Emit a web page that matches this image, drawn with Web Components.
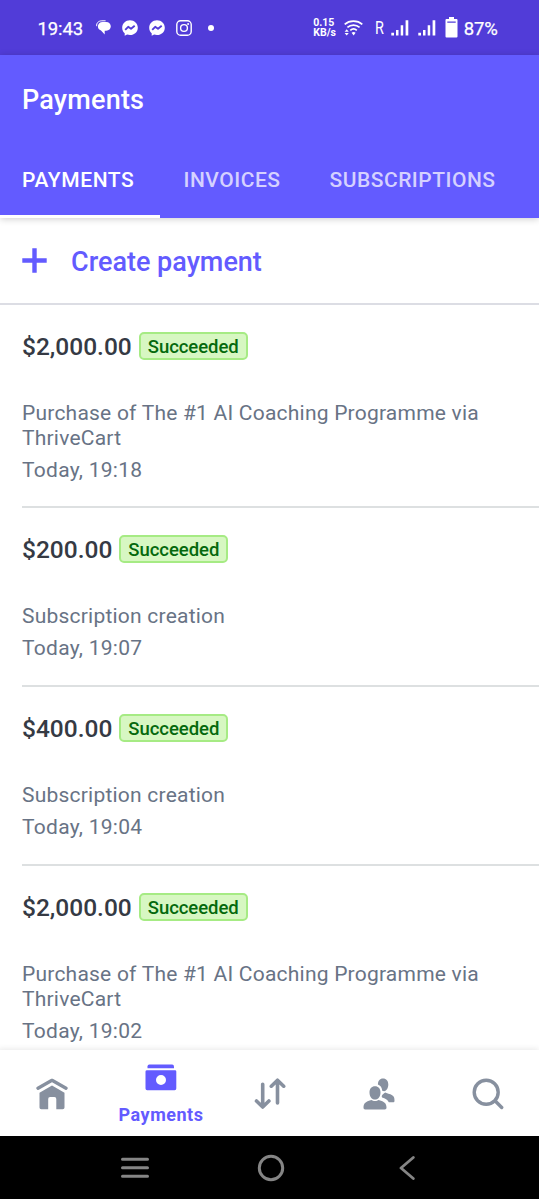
<!DOCTYPE html>
<html lang="en">
<head>
<meta charset="utf-8">
<title>Payments</title>
<style>
html,body{margin:0;height:100%;overflow:hidden;background:#fff}
body{font-family:Roboto,"Liberation Sans",sans-serif}
</style>
</head>
<body>
<payments-app></payments-app>
<script>
const define=(name,html,setup)=>customElements.define(name,class extends HTMLElement{
  connectedCallback(){
    if(this.shadowRoot)return;
    const t=document.createElement('template');
    t.innerHTML=html;
    this.attachShadow({mode:'open'}).append(t.content.cloneNode(true));
    if(setup)setup(this,this.shadowRoot);
  }
});

const ICONS={
  chat:['0 0 15 15','<path d="M.7 6.200C.2 3 2.600.8 5.800.8h3.800" fill="none" stroke="currentColor" stroke-width="1"/><path d="M6.600 1.900h3.600c2.700 0 4.600 1.900 4.600 4.400s-1.900 4.400-4.600 4.400H8.700v3.900L5 10.500C3 9.900 1.900 8.400 1.900 6.300c0-2.500 2-4.400 4.700-4.400z"/>'],
  messenger:['0 0 16 16','<path d="M8 .2C3.600.2.200 3.400.200 7.700c0 2.300 1 4.200 2.500 5.500V15.800l2.400-1.200c.9.300 1.900.4 2.900.4 4.400 0 7.800-3.100 7.800-7.300S12.400.2 8 .2z"/><path d="M3.200 9.800 6.200 6.800 9 8.700 12.700 5.800" fill="none" stroke="#513cd8" stroke-width="1.900" stroke-linejoin="round"/>'],
  instagram:['0 0 16 16','<g fill="none" stroke="currentColor" stroke-width="1.400"><rect x=".8" y=".8" width="14.400" height="14.400" rx="3.800"/><circle cx="8" cy="8" r="3.400"/></g><circle cx="12.100" cy="3.900" r="1"/>'],
  wifi:['0 0 19 16','<g fill="none" stroke="currentColor" stroke-width="1.700"><path d="M.7 4.300C5.500.1 13.500.1 18.300 4.300"/><path d="M3.400 7.400c3.500-3.100 8.700-3.100 12.200 0"/><path d="M6.300 10.300c2-1.800 4.600-1.800 6.500 0"/></g><path d="M7.600 12.800q2-1.500 4 0l-2 2.600zM.6 11.800 2.700 9.300l2.100 2.500zM.6 12.900h4.200l-2.100 2.500z"/>'],
  signal:['0 0 18 16','<path d="M.3 12.700h2.700v2.900H.3zM5 10h2.500v5.600H5zM9.700 5.300h2.500v10.300H9.700zM14.600.2h2.700v15.400h-2.700z"/>'],
  battery:['0 0 13 21','<path fill-rule="evenodd" d="M4 0h5v2h2.500q1 0 1 1v16.500q0 1-1 1h-10q-1 0-1-1V3q0-1 1-1H4zM2.300 4.500v1.300h8.400V4.500z"/>'],
  plus:['0 0 25 25','<path d="M10.300.3h4.400v10h10v4.400h-10v10h-4.400v-10H.3v-4.400h10z"/>'],
  home:['0 0 32 32','<path d="M2 10.300 16 2.300l14 8" fill="none" stroke="currentColor" stroke-width="3.300" stroke-linecap="round" stroke-linejoin="round"/><path d="M3.500 14.800 16 7.500l12.500 7.300v14.700q0 1.800-1.800 1.800H20.300V21q0-1.900-1.900-1.900h-4.300q-1.900 0-1.900 1.900v10.300H5.300q-1.800 0-1.800-1.800z"/>'],
  cash:['0 0 32 27','<path d="M2.500 4.300V2.500Q2.500.6 4.400.6h22.700q1.900 0 1.900 1.900v1.800z"/><path fill-rule="evenodd" d="M2 6.200h28q1.300 0 1.300 1.300v17q0 1.700-1.700 1.700H2.200Q.5 26.200.5 24.500v-17q0-1.300 1.500-1.300zM16 11a5 5 0 1 0 0 10 5 5 0 0 0 0-10z"/>'],
  transfer:['0 0 32 32','<g fill="none" stroke="currentColor" stroke-width="3.600" stroke-linecap="round" stroke-linejoin="round"><path d="M8.700 6.200v22.500M2.500 23l6.200 6 6.200-6M23.500 25V2.700M17.300 8.200l6.200-6 6.200 6"/></g>'],
  people:['0 0 32 32','<path d="M20 .5c3.300 0 5.300 2.500 5.300 5.900 0 3.100-1.600 6.300-4.200 6.800-.8 0-1.300-.1-1.900-.4-.1-3.100-1.700-5.300-4.300-6.300C15 3 16.700.5 20 .5zM19.100 19.500c-.6-.8-.4-1.800.3-2.700l2-1.900q1-.8 2 0c2.700 1 5.600 1.300 7.200 3.700.8 1.200.9 3 .9 4.300 0 .9-.6 1.400-1.500 1.400h-4.200c-1.200-2.700-3.600-4.100-6.700-4.800zM12 8.300c3.400 0 5.500 2.500 5.500 6.100 0 3.900-2.200 7.100-5.500 7.100s-5.500-3.200-5.500-7.100c0-3.600 2.100-6.100 5.500-6.100zM7.600 22.200q1-.4 1.900.2 2.500 1.200 5 0 .9-.6 1.900-.2c4.500 1.100 7.100 2.900 7.100 7.300 0 1.300-.5 1.900-1.800 1.900H2.300C1 31.400.5 30.800.5 29.500c0-4.400 2.600-6.200 7.100-7.300z"/>'],
  search:['0 0 32 32','<g fill="none" stroke="currentColor" stroke-width="3.400" stroke-linecap="round"><circle cx="14.200" cy="14.200" r="12"/><path d="m23.500 23.300 6.200 6.200"/></g>'],
  menu:['0 0 28 22','<path d="M1.500 2.300h25M1.500 10.800h25M1.500 19.300h25" stroke="currentColor" stroke-width="3" stroke-linecap="round"/>'],
  circle:['0 0 28 28','<circle cx="14" cy="14" r="11.700" fill="none" stroke="currentColor" stroke-width="3"/>'],
  back:['0 0 16 24','<path d="M14.300 1.500 2 12l12.300 10.500" fill="none" stroke="currentColor" stroke-width="2.800" stroke-linecap="round" stroke-linejoin="round"/>']
};
define('ui-icon','<style>:host{display:block;flex:none}svg{display:block;width:100%;height:100%;fill:currentColor}</style><svg aria-hidden="true"></svg>',(el,root)=>{
  const [box,body]=ICONS[el.getAttribute('name')],svg=root.querySelector('svg');
  svg.setAttribute('viewBox',box);svg.innerHTML=body;
  const [,,w,h]=box.split(' ');
  el.style.width=w+'px';el.style.height=h+'px';
});

define('status-bar',`<style>
:host{display:flex;align-items:center;height:55px;box-sizing:border-box;padding:0 42px 0 37.5px;background:#513cd8;color:#fff}
.time,.pct{font-size:18.500px;line-height:22px;padding-top:2px;-webkit-text-stroke:.25px currentColor}
.time{letter-spacing:-.1px;width:58px}
.left,.right{display:flex;align-items:center}
.left{gap:11px}.dot{width:6px;height:6px;border-radius:50%;background:#fff;margin-left:5px}
.right{margin-left:auto}
.rate{font-size:10.500px;line-height:10px;font-weight:700;width:30.500px;white-space:nowrap}
.rate div{height:10px}
.r{font-size:18px;line-height:22px;font-weight:400;margin:0 8px 0 12px;transform:scaleX(.8);transform-origin:left;width:8px}
</style>
<div class="left"><div class="time">19:43</div></div>
<div class="left"><ui-icon name="chat"></ui-icon><ui-icon name="messenger"></ui-icon><ui-icon name="messenger"></ui-icon><ui-icon name="instagram"></ui-icon><span class="dot"></span></div>
<div class="right"><div class="rate"><div>0.15</div><div>KB/s</div></div><ui-icon name="wifi"></ui-icon><div class="r">R</div><ui-icon name="signal"></ui-icon><ui-icon name="signal" style="margin-left:9px"></ui-icon><ui-icon name="battery" style="margin-left:9px"></ui-icon><div class="pct" style="margin:0 -.5px 0 6px;letter-spacing:-.2px">87%</div></div>`);

define('tab-item',`<style>
:host{display:block;box-sizing:border-box;height:75px;padding:24px 0 0;color:#d5d1ff;font-size:21px;line-height:26px;font-weight:500;letter-spacing:.5px;white-space:nowrap;border-bottom:3px solid transparent}
:host([active]){color:#fff;border-color:#fff;letter-spacing:.6px}
</style><slot></slot>`);
define('app-header',`<style>
:host{display:block;height:163px;background:#635bff;color:#fff;box-shadow:0 1px 7px rgba(0,0,0,.2);position:relative}
h1{margin:0;padding:29px 22px 0;height:59px;font-size:27px;line-height:32px;font-weight:500;letter-spacing:.2px}
nav{display:flex}
tab-item:nth-child(1){width:159.500px;padding-left:22px}
tab-item:nth-child(2){width:146px;padding-left:24px}
tab-item:nth-child(3){padding-left:24px}
</style><h1>Payments</h1><nav><tab-item active>PAYMENTS</tab-item><tab-item>INVOICES</tab-item><tab-item>SUBSCRIPTIONS</tab-item></nav>`);

define('create-action',`<style>
:host{display:flex;align-items:center;box-sizing:border-box;height:87px;padding:0 22px 1px;gap:24px;color:#635bff;border-bottom:2px solid #dcdde4;font-size:27px;line-height:32px;font-weight:500}
span{padding-top:3px}
</style><ui-icon name="plus"></ui-icon><span><slot></slot></span>`);

define('status-badge',`<style>
:host{display:block;box-sizing:border-box;height:28px;padding:0 7px;border:2px solid #a6eb84;border-radius:5px;background:#d7f7c2;color:#05690d;font-size:18.500px;line-height:26px;font-weight:500;letter-spacing:-.05px}
</style><slot></slot>`);

define('payment-row',`<style>
:host{display:block;box-sizing:border-box;height:179px;margin-left:22px;padding:27px 0 0;border-bottom:2px solid #dde0e1;color:#687385}
:host([tall]){height:203px}
.top{display:flex;align-items:center;gap:7px;height:28px;margin-bottom:41px}
.amount{font-size:24.500px;line-height:30px;font-weight:500;color:#353a44;padding-top:2px}
.desc,.date{font-size:21px;line-height:25px;letter-spacing:.27px}
.desc{width:480px;letter-spacing:.22px}.date{margin-top:7px}
</style><div class="top"><div class="amount"></div><status-badge>Succeeded</status-badge></div><div class="desc"><slot></slot></div><div class="date"></div>`,(el,root)=>{
  root.querySelector('.amount').textContent=el.getAttribute('amount');
  root.querySelector('.date').textContent=el.getAttribute('date');
});

define('bottom-nav',`<style>
:host{display:grid;grid-template-columns:repeat(5,109px);height:86px;margin-left:-2.500px;background:#fff;color:#87909f;box-shadow:0 -1px 6px rgba(0,0,0,.09);position:relative}
.item{display:flex;flex-direction:column;align-items:center;padding-top:27.500px}
.active{padding-top:14px;color:#635bff}
.label{font-size:18px;line-height:22px;font-weight:700;letter-spacing:.5px;margin-top:13px}
</style>
<div class="item"><ui-icon name="home"></ui-icon></div>
<div class="item active"><ui-icon name="cash"></ui-icon><span class="label">Payments</span></div>
<div class="item"><ui-icon name="transfer"></ui-icon></div>
<div class="item"><ui-icon name="people"></ui-icon></div>
<div class="item"><ui-icon name="search"></ui-icon></div>`);

define('system-nav',`<style>
:host{display:grid;grid-template-columns:repeat(3,136px);padding-left:66.500px;height:63px;background:#000;color:#858585;place-items:center;align-content:center;box-sizing:border-box;position:relative}
</style><ui-icon name="menu"></ui-icon><ui-icon name="circle"></ui-icon><ui-icon name="back"></ui-icon>`);

define('payments-app',`<style>
:host{display:flex;flex-direction:column;height:1199px;overflow:hidden}
status-bar,app-header,bottom-nav,system-nav{flex:none}
main{flex:1;min-height:0;overflow:hidden}
</style>
<status-bar></status-bar><app-header></app-header>
<main><create-action>Create payment</create-action>
<payment-row tall amount="$2,000.00" date="Today, 19:18">Purchase of The #1 AI Coaching Programme via ThriveCart</payment-row>
<payment-row amount="$200.00" date="Today, 19:07">Subscription creation</payment-row>
<payment-row amount="$400.00" date="Today, 19:04">Subscription creation</payment-row>
<payment-row tall amount="$2,000.00" date="Today, 19:02">Purchase of The #1 AI Coaching Programme via ThriveCart</payment-row></main>
<bottom-nav></bottom-nav><system-nav></system-nav>`);
</script>
</body>
</html>
